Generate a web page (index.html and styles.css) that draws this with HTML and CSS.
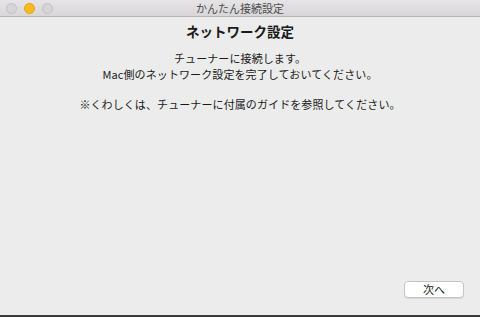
FILE: index.html
```html
<!DOCTYPE html>
<html lang="ja">
<head>
  <meta charset="UTF-8">
  <title>かんたん接続設定</title>
  <link rel="stylesheet" href="styles.css">
</head>
<body>
  <div class="window">
    <div class="titlebar">
      <div class="lights">
        <span class="light"></span>
        <span class="light active"></span>
        <span class="light"></span>
      </div>
      <span class="title">かんたん接続設定</span>
    </div>

    <div class="content">
      <h1>ネットワーク設定</h1>
      <p>チューナーに接続します。<br>Mac側のネットワーク設定を完了しておいてください。</p>
      <p class="note">※くわしくは、チューナーに付属のガイドを参照してください。</p>
    </div>

    <div class="footer">
      <button class="button">次へ</button>
    </div>
  </div>
</body>
</html>
```

FILE: styles.css
```css
/* General */
body {
  margin: 0;
  width: 480px;
  height: 317px;
  overflow: hidden;
  font-family: "Noto Sans CJK JP", sans-serif;
  background: #ececec;
  color: #1a1a1a;
}

.window {
  display: flex;
  flex-direction: column;
  height: 315px;
  border-bottom: 2px solid #3a3a3e;
  background: #ececec;
}

/* Title bar */
.titlebar {
  position: relative;
  height: 16px;
  display: flex;
  align-items: center;
  justify-content: center;
  background: linear-gradient(to bottom, #e6e4e6, #d8d6d8);
  border-bottom: 1px solid #b5b5b5;
}

.lights {
  position: absolute;
  left: 6px;
  top: 3px;
  display: flex;
  gap: 7px;
}

.light {
  width: 9px;
  height: 9px;
  border-radius: 50%;
  background: #d7d5d7;
  border: 0.5px solid #c0bec0;
}

.light.active {
  background: #fbbb1f;
  border-color: #e2a016;
}

.title {
  font-size: 11px;
  color: #4d4d4d;
  line-height: 16px;
}

/* Content */
.content {
  flex: 1;
  text-align: center;
}

h1 {
  margin: 5px 0 0;
  font-size: 13.5px;
  font-weight: bold;
  line-height: 18px;
}

p {
  margin: 10px 0 0;
  font-size: 11px;
  line-height: 16px;
  letter-spacing: 0.1px;
}

p.note {
  margin-top: 14px;
}

/* Footer */
.footer {
  display: flex;
  justify-content: flex-end;
  padding: 0 16px 17px 0;
}

.button {
  width: 60px;
  height: 17px;
  padding: 0;
  font-family: "Noto Sans CJK JP", sans-serif;
  font-size: 11px;
  line-height: 15px;
  color: #1a1a1a;
  background: #ffffff;
  border: 1px solid #c4c4c4;
  border-radius: 4px;
  box-shadow: 0 1px 0 rgba(0, 0, 0, 0.08);
}
```
